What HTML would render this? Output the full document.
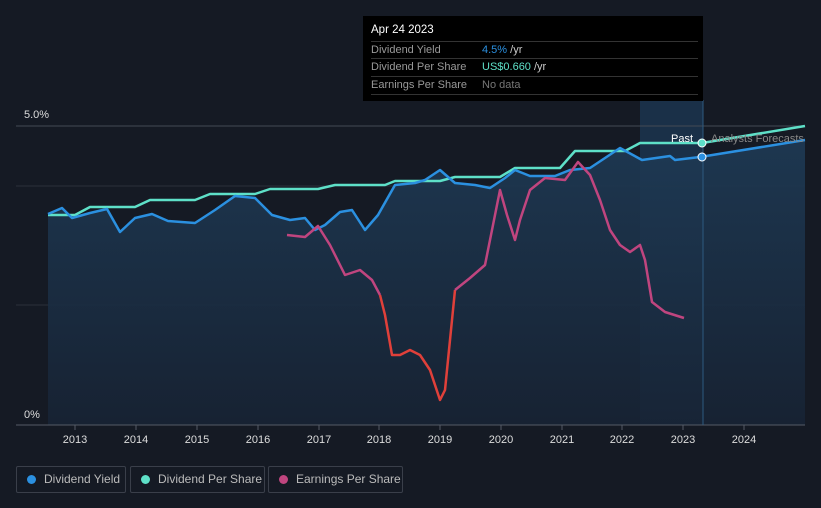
<!DOCTYPE html>
<html><head><style>
body{margin:0;background:#151a24;width:821px;height:508px;overflow:hidden;font-family:"Liberation Sans",sans-serif;position:relative}
.tip{position:absolute;left:363px;top:16px;width:340px;height:85px;background:#000;color:#fff;font-size:11px}
.tip .row{position:absolute;left:8px;width:327px;border-top:1px solid #333;height:17px;line-height:17px;color:#999}
.lg{position:absolute;top:466px;height:27px;border:1px solid #3a3f4a;border-radius:2px;color:#bbb;font-size:12px;line-height:25px;box-sizing:border-box;white-space:nowrap;overflow:hidden}
.lg i{display:inline-block;width:9px;height:9px;border-radius:50%;margin:0 8px 0 10px;vertical-align:-1px}
</style></head><body>
<svg width="821" height="508" style="position:absolute;left:0;top:0">
<defs><linearGradient id="g" x1="0" y1="0" x2="0" y2="1"><stop offset="0" stop-color="#1e3a55" stop-opacity=".9"/><stop offset="1" stop-color="#172334" stop-opacity=".9"/></linearGradient></defs>
<rect x="640" y="100" width="63" height="325" fill="#1a3048"/>
<line x1="16" y1="126" x2="805" y2="126" stroke="#444a55"/>
<line x1="16" y1="186" x2="805" y2="186" stroke="#2a303a"/>
<line x1="16" y1="305" x2="805" y2="305" stroke="#2a303a"/>
<path d="M48,214 L62,208 72,218 90,213 107,209 120,232 135,218 152,214 168,221 195,223 215,210 235,196 255,198 272,215 290,220 305,218 315,230 325,225 340,212 352,210 365,230 378,215 395,185 415,183 425,180 440,170 455,183 475,185 490,188 505,178 515,170 530,176 555,176 570,170 590,168 620,148 642,160 670,156 675,160 700,157 805,140 L805,425 L48,425Z" fill="url(#g)"/>
<line x1="16" y1="425" x2="805" y2="425" stroke="#555b66"/>
<line x1="703" y1="100" x2="703" y2="425" stroke="#2d5a80"/>
<path d="M48,215 L75,215 90,207 135,207 150,200 195,200 210,194 255,194 270,189 318,189 335,185 385,185 395,181 440,181 455,177 500,177 515,168 560,168 575,151 625,151 640,143 702,143 805,126" fill="none" stroke="#5ee0c8" stroke-width="2.5" stroke-linejoin="round"/>
<path d="M48,214 L62,208 72,218 90,213 107,209 120,232 135,218 152,214 168,221 195,223 215,210 235,196 255,198 272,215 290,220 305,218 315,230 325,225 340,212 352,210 365,230 378,215 395,185 415,183 425,180 440,170 455,183 475,185 490,188 505,178 515,170 530,176 555,176 570,170 590,168 620,148 642,160 670,156 675,160 700,157 805,140" fill="none" stroke="#2b90e0" stroke-width="2.5" stroke-linejoin="round"/>
<path d="M287,235 L305,237 318,226 330,245 345,275 360,270 372,280 380,295" fill="none" stroke="#c0457f" stroke-width="2.5" stroke-linejoin="round"/>
<path d="M380,295 L385,315 392,355 400,355 410,350 420,355 430,370 440,400 445,390 452,320 455,290" fill="none" stroke="#e0403a" stroke-width="2.5" stroke-linejoin="round"/>
<path d="M455,290 L470,278 485,265 492,230 500,190 507,215 515,240 520,220 530,190 545,178 565,180 578,162 590,175 600,200 610,230 620,245 630,252 640,245 645,260 652,302 665,312 684,318" fill="none" stroke="#c0457f" stroke-width="2.5" stroke-linejoin="round"/>
<circle cx="702" cy="143" r="4" fill="#5ee0c8" stroke="#fff" stroke-width="1"/>
<circle cx="702" cy="157" r="4" fill="#2b90e0" stroke="#fff" stroke-width="1"/>
<g font-size="11" fill="#ddd">
<text x="24" y="118">5.0%</text><text x="24" y="418">0%</text>
<text x="671" y="142" fill="#fff">Past</text><text x="711" y="142" fill="#888">Analysts Forecasts</text>
<g text-anchor="middle"><text x="75" y="443">2013</text><text x="136" y="443">2014</text><text x="197" y="443">2015</text><text x="258" y="443">2016</text><text x="319" y="443">2017</text><text x="379" y="443">2018</text><text x="440" y="443">2019</text><text x="501" y="443">2020</text><text x="562" y="443">2021</text><text x="622" y="443">2022</text><text x="683" y="443">2023</text><text x="744" y="443">2024</text></g>
</g>
<g stroke="#555b66"><line x1="75" y1="425" x2="75" y2="430"/><line x1="136" y1="425" x2="136" y2="430"/><line x1="197" y1="425" x2="197" y2="430"/><line x1="258" y1="425" x2="258" y2="430"/><line x1="319" y1="425" x2="319" y2="430"/><line x1="379" y1="425" x2="379" y2="430"/><line x1="440" y1="425" x2="440" y2="430"/><line x1="501" y1="425" x2="501" y2="430"/><line x1="562" y1="425" x2="562" y2="430"/><line x1="622" y1="425" x2="622" y2="430"/><line x1="683" y1="425" x2="683" y2="430"/><line x1="744" y1="425" x2="744" y2="430"/></g>
</svg>
<div class="tip">
<div style="position:absolute;left:8px;top:8px;font-size:11.5px">Apr 24 2023</div>
<div class="row" style="top:25px">Dividend Yield<span style="position:absolute;left:111px"><b style="font-weight:normal;color:#2b90e0">4.5%</b> <span style="color:#ccc">/yr</span></span></div>
<div class="row" style="top:42px">Dividend Per Share<span style="position:absolute;left:111px"><b style="font-weight:normal;color:#5ee0c8">US$0.660</b> <span style="color:#ccc">/yr</span></span></div>
<div class="row" style="top:60px;border-bottom:1px solid #333">Earnings Per Share<span style="position:absolute;left:111px;color:#777">No data</span></div>
</div>
<div class="lg" style="left:16px;width:110px"><i style="background:#2b90e0"></i>Dividend Yield</div>
<div class="lg" style="left:130px;width:135px"><i style="background:#5ee0c8"></i>Dividend Per Share</div>
<div class="lg" style="left:268px;width:135px"><i style="background:#c0457f"></i>Earnings Per Share</div>
</body></html>
